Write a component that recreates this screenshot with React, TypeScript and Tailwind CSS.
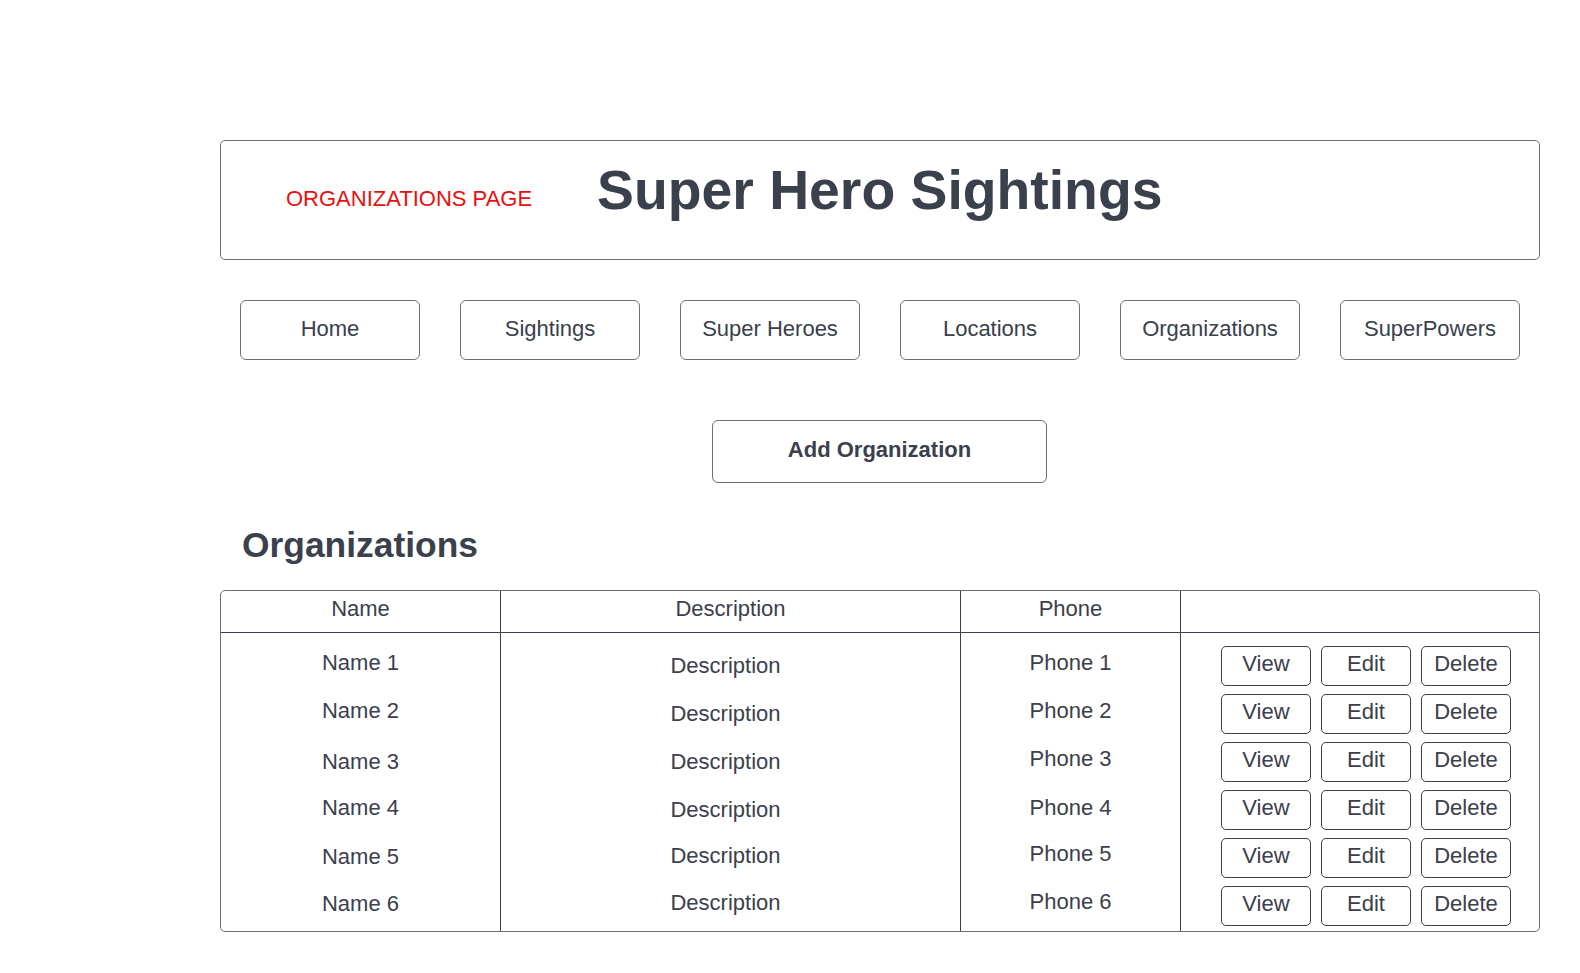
import React from "react";

const navItems = ["Home", "Sightings", "Super Heroes", "Locations", "Organizations", "SuperPowers"];
const rows = [1, 2, 3, 4, 5, 6];
const nameOffsets = ["-2px", "-2px", "1px", "-1px", "0px", "-1px"];
const descOffsets = ["1px", "1px", "1px", "1px", "-1px", "-2px"];
const phoneOffsets = ["-2px", "-2px", "-2px", "-1px", "-3px", "-3px"];

export default function App() {
  return (
    <div
      className="w-[1580px] h-[973px] bg-white text-[#3a404c] overflow-hidden"
      style={{ fontFamily: '"Liberation Sans", Arial, sans-serif' }}
    >
      <div className="pt-[140px] pl-[220px] w-[1540px]">
        {/* Header */}
        <div className="h-[120px] border border-[#6b7078] rounded-[5px] flex items-center pl-[65px] gap-[65px]">
          <span className="text-[22px] text-[#e8100f] leading-none mt-[-2px]">ORGANIZATIONS PAGE</span>
          <h1 className="text-[55.3px] font-bold leading-none mb-[18px]">Super Hero Sightings</h1>
        </div>

        {/* Nav */}
        <div className="mt-[40px] px-[20px] flex gap-[40px]">
          {navItems.map((n) => (
            <button
              key={n}
              className="w-[180px] h-[60px] border border-[#6b7078] rounded-[6px] text-[22px] leading-none flex items-center justify-center pb-[3px]"
            >
              {n}
            </button>
          ))}
        </div>

        {/* Add */}
        <div className="mt-[60px] flex pl-[492px]">
          <button className="w-[335px] h-[63px] border border-[#6b7078] rounded-[6px] text-[22px] font-bold leading-none flex items-center justify-center pb-[4px]">
            Add Organization
          </button>
        </div>

        {/* Heading */}
        <h2 className="mt-[42px] pl-[22px] text-[35.4px] font-bold leading-[40px]">Organizations</h2>

        {/* Table */}
        <div className="mt-[25px] h-[342px] border border-[#6b7078] rounded-[5px] grid grid-cols-[280px_460px_220px_1fr] grid-rows-[42px_1fr] text-[22px] leading-none">
          {/* Header row */}
          <div className="border-b border-r border-[#3a404c] flex items-center justify-center pb-[6px]">Name</div>
          <div className="border-b border-r border-[#3a404c] flex items-center justify-center pb-[6px]">Description</div>
          <div className="border-b border-r border-[#3a404c] flex items-center justify-center pb-[6px]">Phone</div>
          <div className="border-b border-[#3a404c]"></div>

          {/* Body columns */}
          <div className="border-r border-[#3a404c] pt-[11px] flex flex-col min-h-0 overflow-hidden">
            {rows.map((r, i) => (
              <div key={r} className="h-[48px] shrink-0 flex justify-center pt-[10px]">
                <span style={{ marginTop: nameOffsets[i] }}>Name {r}</span>
              </div>
            ))}
          </div>
          <div className="border-r border-[#3a404c] pt-[11px] flex flex-col min-h-0 overflow-hidden">
            {rows.map((r, i) => (
              <div key={r} className="h-[48px] shrink-0 flex justify-center pt-[10px] pr-[10px]">
                <span style={{ marginTop: descOffsets[i] }}>Description</span>
              </div>
            ))}
          </div>
          <div className="border-r border-[#3a404c] pt-[11px] flex flex-col min-h-0 overflow-hidden">
            {rows.map((r, i) => (
              <div key={r} className="h-[48px] shrink-0 flex justify-center pt-[10px]">
                <span style={{ marginTop: phoneOffsets[i] }}>Phone {r}</span>
              </div>
            ))}
          </div>
          <div className="pt-[13px] pl-[40px] flex flex-col gap-[8px] min-h-0">
            {rows.map((r) => (
              <div key={r} className="flex gap-[10px]">
                {["View", "Edit", "Delete"].map((b) => (
                  <button
                    key={b}
                    className="w-[90px] h-[40px] border border-[#3a404c] rounded-[5px] flex items-center justify-center pb-[4px]"
                  >
                    {b}
                  </button>
                ))}
              </div>
            ))}
          </div>
        </div>
      </div>
    </div>
  );
}
